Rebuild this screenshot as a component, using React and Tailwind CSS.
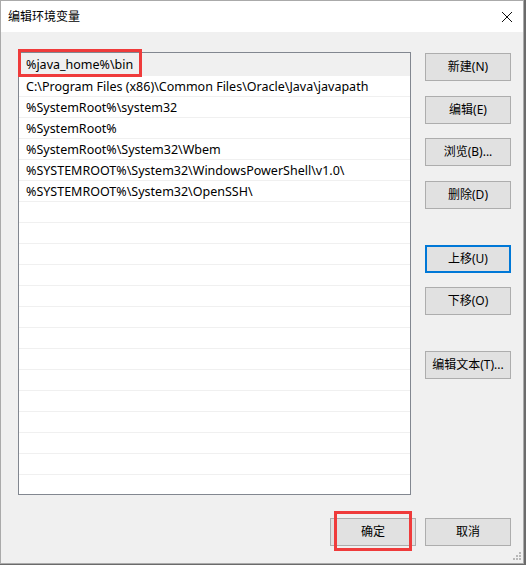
import React from 'react';

const paths = [
  '%java_home%\\bin',
  'C:\\Program Files (x86)\\Common Files\\Oracle\\Java\\javapath',
  '%SystemRoot%\\system32',
  '%SystemRoot%',
  '%SystemRoot%\\System32\\Wbem',
  '%SYSTEMROOT%\\System32\\WindowsPowerShell\\v1.0\\',
  '%SYSTEMROOT%\\System32\\OpenSSH\\',
];

const rows = [...paths, ...Array(14).fill('')];

const font = { fontFamily: '"Noto Sans", "Noto Sans CJK SC", sans-serif' };

const Button = ({ children, focused, className = '' }) => (
  <button
    className={`h-[28px] w-[86px] bg-[#e1e1e1] text-[12px] text-black flex items-center justify-center ${
      focused ? 'border-2 border-[#0078d7]' : 'border border-[#adadad]'
    } ${className}`}
  >
    {children}
  </button>
);

const EditEnvDialog = () => {
  return (
    <div className="w-[526px] h-[565px] bg-[#6b6b6b] overflow-hidden" style={font}>
      <div className="w-[524px] h-[564px] border border-[#aaaaaa] bg-[#f0f0f0] flex flex-col">
        {/* title bar */}
        <div className="h-[31px] bg-white flex items-center justify-between pl-[7px] pr-[8px] shrink-0">
          <span className="text-[12px] text-black">编辑环境变量</span>
          <svg width="14" height="14" viewBox="0 0 14 14" className="mr-[1px]">
            <path d="M2 2 L12 12 M12 2 L2 12" stroke="#111" strokeWidth="1" fill="none" />
          </svg>
        </div>

        {/* body */}
        <div className="flex-1 flex flex-col pt-[20px] pl-[17px] pr-[12px] relative">
          <div className="flex gap-[14px]">
            <div className="relative w-[393px] h-[443px] border border-[#828790] bg-white overflow-hidden">
              {rows.map((p, i) => (
                <div
                  key={i}
                  className={`${i === 0 ? 'h-[23px] bg-[#f0f0f0]' : 'h-[21px]'} border-b border-[#f0f0f0] pl-[7px] pt-[2px] flex items-center text-[12.5px] leading-none text-black whitespace-nowrap`}
                >
                  {p}
                </div>
              ))}
            </div>

            <div className="flex flex-col pt-[1px]">
              <Button>新建(N)</Button>
              <Button className="mt-[15px]">编辑(E)</Button>
              <Button className="mt-[14px]">浏览(B)...</Button>
              <Button className="mt-[15px]">删除(D)</Button>
              <Button focused className="mt-[36px]">上移(U)</Button>
              <Button className="mt-[14px]">下移(O)</Button>
              <Button className="mt-[36px]">编辑文本(T)...</Button>
            </div>
          </div>

          <div className="flex justify-end gap-[9px] mt-[23px]">
            <Button>确定</Button>
            <Button>取消</Button>
          </div>

          {/* red highlight marks */}
          <div className="absolute left-[17px] top-[17px] w-[124px] h-[28px] border-[3px] border-[#ef3b3b] pointer-events-none" />
          <div className="absolute left-[333px] top-[479px] w-[78px] h-[40px] border-[3px] border-[#ef3b3b] pointer-events-none" />

          {/* resize grip */}
          <svg width="10" height="10" viewBox="0 0 10 10" className="absolute right-[1px] bottom-[2px]">
            <rect x="7" y="1" width="2" height="2" fill="#b8b8b8" />
            <rect x="4" y="4" width="2" height="2" fill="#b8b8b8" />
            <rect x="7" y="4" width="2" height="2" fill="#b8b8b8" />
            <rect x="1" y="7" width="2" height="2" fill="#b8b8b8" />
            <rect x="4" y="7" width="2" height="2" fill="#b8b8b8" />
            <rect x="7" y="7" width="2" height="2" fill="#b8b8b8" />
          </svg>
        </div>
      </div>
    </div>
  );
};

export default function App() {
  return <EditEnvDialog />;
}
